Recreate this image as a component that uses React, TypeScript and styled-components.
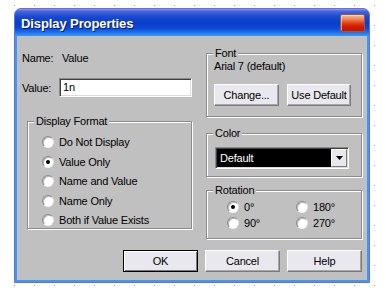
import React from "react";
import styled, { createGlobalStyle } from "styled-components";

const Global = createGlobalStyle`
  html, body { margin: 0; padding: 0; }
  body {
    width: 386px;
    height: 290px;
    overflow: hidden;
    background-color: #ffffff;
    background-image: radial-gradient(circle at 10.5px 10.5px, #a8a8a8 0.75px, transparent 0.8px);
    background-size: 20px 20px;
    background-position: 4px 15px;
    font-family: "Liberation Sans", Arial, sans-serif;
    font-size: 11px;
    color: #000;
  }
`;

const Page = styled.div`
  padding: 8px 0 0 14px;
`;

const Window = styled.div`
  box-sizing: border-box;
  width: 356px;
  height: 275px;
  border: 1px solid #6d6dd8;
  border-radius: 7px 7px 0 0;
  background: #3d98f7;
  overflow: hidden;
  display: flex;
  flex-direction: column;
`;

const TitleBar = styled.div`
  box-sizing: border-box;
  height: 27px;
  flex: none;
  display: flex;
  align-items: center;
  justify-content: space-between;
  padding: 1px 4px 0 6px;
  background: linear-gradient(
    180deg,
    #8a9cec 0%,
    #4a66dc 8%,
    #1648d0 30%,
    #0a3ec8 55%,
    #0c4ad8 72%,
    #1e76ee 88%,
    #3a98f8 100%
  );
`;

const Title = styled.span`
  font-family: "Liberation Sans", Arial, sans-serif;
  font-weight: bold;
  font-size: 13px;
  letter-spacing: -0.1px;
  color: #ffffff;
  text-shadow: 1px 1px 0 #0a1a70;
`;

const CloseButton = styled.div`
  box-sizing: border-box;
  width: 25px;
  height: 18px;
  margin-top: -1px;
  border: 1px solid #8e5e52;
  border-radius: 2px;
  background: linear-gradient(
    180deg,
    #f6c098 0%,
    #ee8a60 25%,
    #e24418 50%,
    #d41c00 70%,
    #c81400 100%
  );
  box-shadow: inset 1px 1px 0 rgba(255, 220, 200, 0.6);
`;

const Client = styled.div`
  flex: 1;
  margin: 0 2px 2px;
  background: #c0c0c0;
  padding: 10px 5px 8px;
  display: flex;
  flex-direction: column;
`;

const Columns = styled.div`
  display: grid;
  grid-template-columns: 170px 156px;
  column-gap: 14px;
  align-items: start;
`;

const Column = styled.div`
  display: flex;
  flex-direction: column;
`;

const Text = styled.div<{ $mt?: number }>`
  line-height: 13px;
  height: 13px;
  letter-spacing: -0.2px;
  white-space: nowrap;
  margin-top: ${(p) => p.$mt ?? 0}px;
`;

const NameRow = styled.div`
  display: flex;
  margin-top: 6px;
  line-height: 13px;
  letter-spacing: -0.2px;
`;

const NameLabel = styled.span`
  width: 40px;
`;

const ValueRow = styled.div`
  display: flex;
  align-items: center;
  margin-top: 13px;
  letter-spacing: -0.2px;
`;

const ValueLabel = styled.span`
  width: 37px;
`;

const TextBox = styled.div`
  box-sizing: border-box;
  width: 133px;
  height: 19px;
  background: #ffffff;
  border: 1px solid;
  border-color: #8a8a8a #ffffff #ffffff #8a8a8a;
  box-shadow: inset 1px 1px 0 #404040, inset -1px -1px 0 #dcdcdc;
  padding: 0 3px;
  line-height: 17px;
  font-size: 11px;
`;

const Group = styled.div<{ $h: number; $mt: number; $ml?: number }>`
  position: relative;
  box-sizing: border-box;
  height: ${(p) => p.$h}px;
  margin-top: ${(p) => p.$mt}px;
  margin-left: ${(p) => p.$ml ?? 0}px;
  border: 1px solid #8c8c8c;
  box-shadow: inset 1px 1px 0 #ffffff, 1px 1px 0 #ffffff;
`;

const Legend = styled.span`
  position: absolute;
  top: -7px;
  left: 6px;
  padding: 0 2px;
  background: #c0c0c0;
  line-height: 13px;
  letter-spacing: -0.2px;
  white-space: nowrap;
`;

const RadioList = styled.div`
  display: flex;
  flex-direction: column;
  padding: 10.5px 0 0 14px;
`;

const RadioRow = styled.div<{ $h: number }>`
  display: flex;
  align-items: center;
  gap: 5px;
  height: ${(p) => p.$h}px;
  letter-spacing: -0.2px;
  white-space: nowrap;
`;

const RadioCircle = styled.span<{ $checked?: boolean }>`
  position: relative;
  box-sizing: border-box;
  flex: none;
  width: 12px;
  height: 12px;
  border-radius: 50%;
  background: #ffffff;
  border: 1px solid;
  border-color: #8a8a8a #e4e4e4 #f4f4f4 #8a8a8a;
  box-shadow: inset 1px 1px 0 #b8b8b8;
  &::after {
    content: "";
    display: ${(p) => (p.$checked ? "block" : "none")};
    position: absolute;
    left: 3px;
    top: 3px;
    width: 4px;
    height: 4px;
    border-radius: 50%;
    background: #000000;
  }
`;

const FontBody = styled.div`
  padding: 6px 0 0 7px;
`;

const ButtonRow = styled.div<{ $gap: number; $mt: number; $justify?: string }>`
  display: flex;
  gap: ${(p) => p.$gap}px;
  margin-top: ${(p) => p.$mt}px;
  justify-content: ${(p) => p.$justify ?? "flex-start"};
`;

const Button = styled.div<{ $w: number; $default?: boolean }>`
  box-sizing: border-box;
  width: ${(p) => p.$w}px;
  height: 22px;
  display: flex;
  align-items: center;
  justify-content: center;
  background: #e9e8ee;
  border: 1px solid;
  border-color: ${(p) =>
    p.$default ? "#000000" : "#ffffff #7a7a7a #7a7a7a #ffffff"};
  box-shadow: ${(p) =>
    p.$default
      ? "inset 1px 1px 0 #ffffff, inset -1px -1px 0 #7a7a7a"
      : "inset -1px -1px 0 #a8a8a8"};
  letter-spacing: -0.2px;
  white-space: nowrap;
`;

const ColorBody = styled.div`
  padding: 13px 0 0 8px;
`;

const Select = styled.div`
  box-sizing: border-box;
  width: 134px;
  height: 22px;
  display: flex;
  border: 1px solid;
  border-color: #8a8a8a #ffffff #ffffff #8a8a8a;
  box-shadow: inset 1px 1px 0 #404040, inset -1px -1px 0 #dcdcdc;
  padding: 1px;
`;

const SelectField = styled.div`
  flex: 1;
  background: #000000;
  color: #ffffff;
  padding-left: 3px;
  line-height: 18px;
  letter-spacing: -0.2px;
`;

const DropButton = styled.div`
  box-sizing: border-box;
  width: 16px;
  display: flex;
  align-items: center;
  justify-content: center;
  background: #e9e8ee;
  border: 1px solid;
  border-color: #ffffff #7a7a7a #7a7a7a #ffffff;
`;

const RotationGrid = styled.div`
  display: grid;
  grid-template-columns: 69px 69px;
  padding: 8px 0 0 20px;
`;

const radios = [
  "Do Not Display",
  "Value Only",
  "Name and Value",
  "Name Only",
  "Both if Value Exists",
];

export default function App() {
  return (
    <>
      <Global />
      <Page>
        <Window>
          <TitleBar>
            <Title>Display Properties</Title>
            <CloseButton />
          </TitleBar>
          <Client>
            <Columns>
              <Column>
                <NameRow>
                  <NameLabel>Name:</NameLabel>
                  <span>Value</span>
                </NameRow>
                <ValueRow>
                  <ValueLabel>Value:</ValueLabel>
                  <TextBox>1n</TextBox>
                </ValueRow>
                <Group $h={108} $mt={24} $ml={5}>
                  <Legend>Display Format</Legend>
                  <RadioList>
                    {radios.map((r) => (
                      <RadioRow key={r} $h={19.5}>
                        <RadioCircle $checked={r === "Value Only"} />
                        <span>{r}</span>
                      </RadioRow>
                    ))}
                  </RadioList>
                </Group>
              </Column>
              <Column>
                <Group $h={64} $mt={7}>
                  <Legend>Font</Legend>
                  <FontBody>
                    <Text>Arial 7 (default)</Text>
                    <ButtonRow $gap={8} $mt={10.5}>
                      <Button $w={65}>Change...</Button>
                      <Button $w={64}>Use Default</Button>
                    </ButtonRow>
                  </FontBody>
                </Group>
                <Group $h={44} $mt={16}>
                  <Legend>Color</Legend>
                  <ColorBody>
                    <Select>
                      <SelectField>Default</SelectField>
                      <DropButton>
                        <svg width="7" height="4" viewBox="0 0 7 4">
                          <path d="M0 0H7L3.5 4Z" fill="#000" />
                        </svg>
                      </DropButton>
                    </Select>
                  </ColorBody>
                </Group>
                <Group $h={49} $mt={13}>
                  <Legend>Rotation</Legend>
                  <RotationGrid>
                    <RadioRow $h={16}>
                      <RadioCircle $checked />
                      <span>0°</span>
                    </RadioRow>
                    <RadioRow $h={16}>
                      <RadioCircle />
                      <span>180°</span>
                    </RadioRow>
                    <RadioRow $h={16}>
                      <RadioCircle />
                      <span>90°</span>
                    </RadioRow>
                    <RadioRow $h={16}>
                      <RadioCircle />
                      <span>270°</span>
                    </RadioRow>
                  </RotationGrid>
                </Group>
              </Column>
            </Columns>
            <ButtonRow $gap={7} $mt={11} $justify="flex-end">
              <Button $w={75} $default>
                OK
              </Button>
              <Button $w={75}>Cancel</Button>
              <Button $w={75}>Help</Button>
            </ButtonRow>
          </Client>
        </Window>
      </Page>
    </>
  );
}
